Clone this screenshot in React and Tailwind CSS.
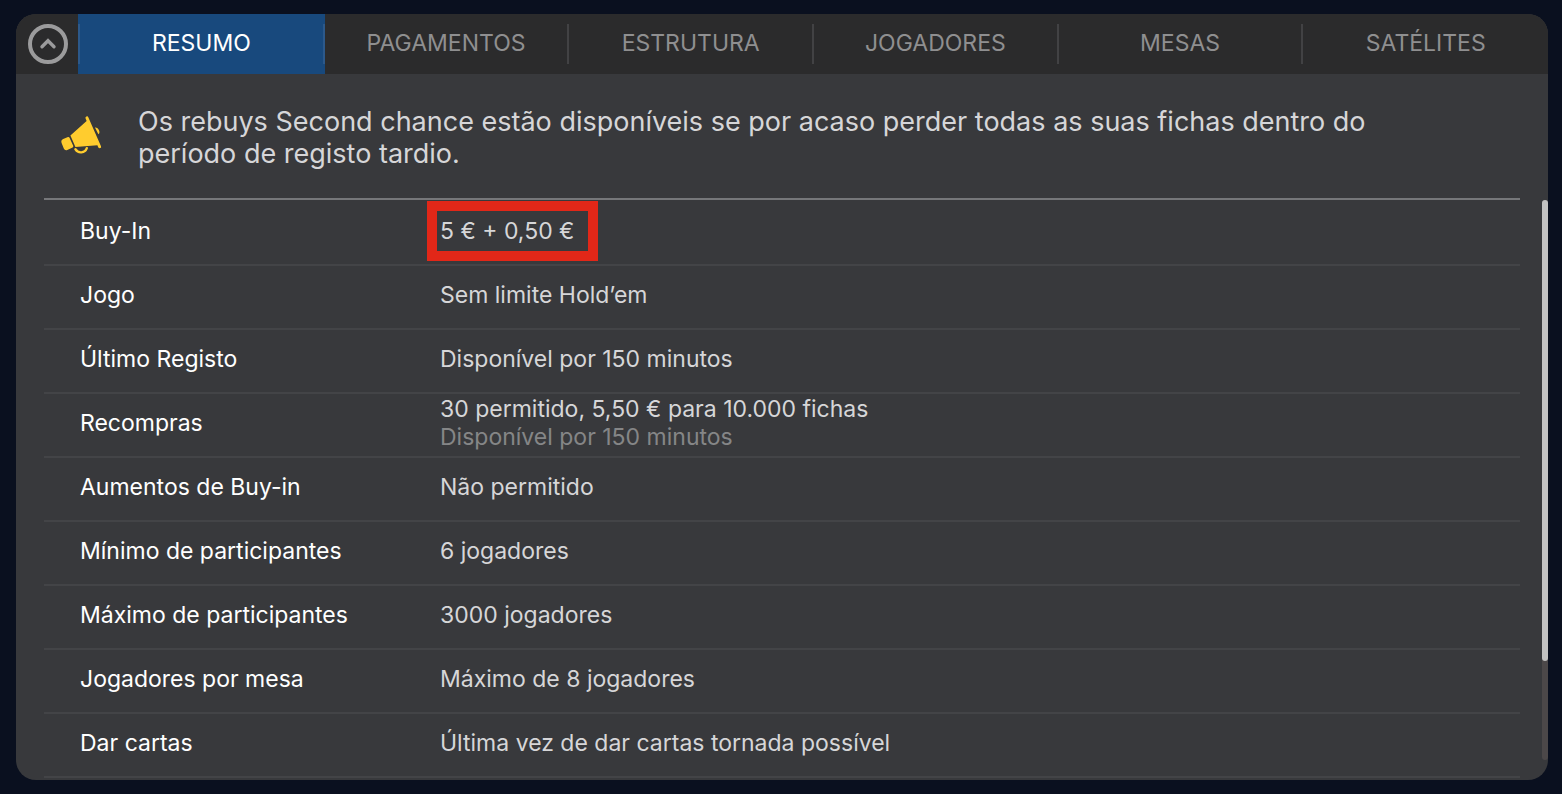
const tabs = ["RESUMO", "PAGAMENTOS", "ESTRUTURA", "JOGADORES", "MESAS", "SATÉLITES"];

const rows = [
  { label: "Buy-In", value: "5 € + 0,50 €", highlighted: true },
  { label: "Jogo", value: "Sem limite Hold’em" },
  { label: "Último Registo", value: "Disponível por 150 minutos" },
  {
    label: "Recompras",
    value: "30 permitido, 5,50 € para 10.000 fichas",
    note: "Disponível por 150 minutos",
  },
  { label: "Aumentos de Buy-in", value: "Não permitido" },
  { label: "Mínimo de participantes", value: "6 jogadores" },
  { label: "Máximo de participantes", value: "3000 jogadores" },
  { label: "Jogadores por mesa", value: "Máximo de 8 jogadores" },
  { label: "Dar cartas", value: "Última vez de dar cartas tornada possível" },
];

function CollapseIcon() {
  return (
    <svg viewBox="0 0 40 40" className="size-10" fill="none" stroke="#9b9b9c" aria-hidden="true">
      <circle cx="20" cy="20" r="18" strokeWidth="4" />
      <path d="M14 22.7 20 16.7l6 6" strokeWidth="3.4" strokeLinecap="round" strokeLinejoin="miter" />
    </svg>
  );
}

function MegaphoneIcon() {
  return (
    <svg viewBox="0 0 42 40" className="h-10 w-[42px] shrink-0" fill="#ffcc2e" aria-hidden="true">
      <path d="M10.4 21.4 26.6 7 25.6 4.6Q25 3 26.4 2.4T28.4 3.4L41 32.2Q41.5 33.6 40.4 34.1T38.3 33.5L37.4 31.2 15.4 33Z" />
      <path d="M3.2 25.1 8 23Q9 22.7 9.4 23.6L13.2 31.8Q13.6 32.9 12.6 33.4L7.3 35.9Q4.9 36.8 3.8 34.5L1.6 29Q.6 26.3 3.2 25.1Z" />
      <path d="M35 13.6Q37.6 13 38.9 16T38.4 20.2Z" />
      <path d="M15.4 35.2Q17.4 38.7 21.4 38.4T26.8 34.2" fill="none" stroke="#ffcc2e" strokeWidth="2.4" strokeLinecap="round" />
    </svg>
  );
}

function TabBar() {
  return (
    <header className="flex h-[60px] bg-[#2b2b2c]">
      <button type="button" aria-label="Recolher" className="flex w-[62px] items-center pl-3">
        <CollapseIcon />
      </button>
      <nav role="tablist" className="flex flex-1">
        {tabs.map((tab, i) => (
          <button
            key={tab}
            type="button"
            role="tab"
            aria-selected={i === 0}
            className={
              i === 0
                ? "flex grow basis-0.5 items-center bg-[#18497d] text-white"
                : "flex grow basis-0 items-center text-[#8f8f90]"
            }
          >
            {i === 0 && <span className="h-10 w-0.5 bg-[#2c598b]" />}
            <span className="flex-1 pb-0.5">{tab}</span>
            {i < tabs.length - 1 && (
              <span className={i === 0 ? "h-10 w-0.5 bg-[#2c598b]" : "h-10 w-0.5 bg-[#424244]"} />
            )}
          </button>
        ))}
      </nav>
    </header>
  );
}

function Value({ row }) {
  if (row.highlighted) {
    return (
      <span className="relative inline-block">
        {row.value}
        <span className="absolute -inset-y-4 -left-[13px] w-[171px] border-10 border-[#e22718]" />
      </span>
    );
  }
  return (
    <>
      {row.value}
      {row.note && <div className="text-[#858687]">{row.note}</div>}
    </>
  );
}

export default function App() {
  return (
    <div className="flex min-h-screen bg-[#0a101f] pt-3.5 pr-3.5 pb-3.5 pl-4 font-['Inter',sans-serif] text-[23px] leading-7">
      <main className="flex flex-1 flex-col overflow-hidden rounded-[20px] bg-[#38393c]">
        <TabBar />
        <div className="mr-7 ml-7 flex gap-9 border-b-2 border-[#76777a] pt-8 pb-7 pl-4">
          <div className="pt-2">
            <MegaphoneIcon />
          </div>
          <p className="max-w-[1300px] text-[27px] leading-8 text-[#d6d6d8]">
            Os rebuys Second chance estão disponíveis se por acaso perder todas as suas fichas dentro do
            período de registo tardio.
          </p>
        </div>
        <div className="flex flex-1 justify-between pl-7">
          <div className="mr-[22px] flex-1 pt-0.5">
            <table className="w-full table-fixed border-separate border-spacing-0 text-left">
              <tbody>
                {rows.map((row) => (
                  <tr key={row.label}>
                    <th
                      scope="row"
                      className="h-16 w-[396px] border-b-2 border-[#434447] p-0 pb-1 pl-9 font-normal text-white"
                    >
                      {row.label}
                    </th>
                    <td className="h-16 border-b-2 border-[#434447] p-0 pb-1 text-[#d6d6d8]">
                      <Value row={row} />
                    </td>
                  </tr>
                ))}
              </tbody>
            </table>
          </div>
          <div className="mb-5 flex w-1.5 flex-col rounded-full bg-[#4c4849]">
            <div className="h-[461px] rounded-full bg-[#c2c2c2]" />
          </div>
        </div>
      </main>
    </div>
  );
}
